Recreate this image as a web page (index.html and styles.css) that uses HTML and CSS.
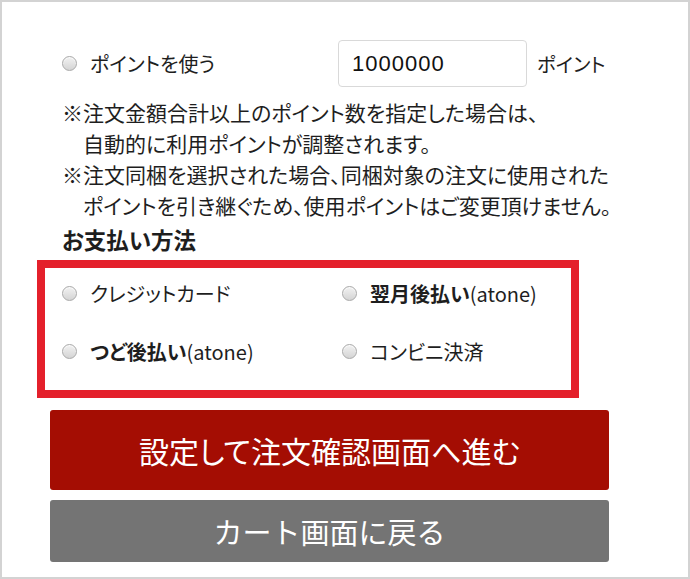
FILE: index.html
```html
<!DOCTYPE html>
<html lang="ja">
<head>
<meta charset="utf-8">
<title>お支払い方法</title>
<link rel="stylesheet" href="styles.css">
</head>
<body>
<div class="frame">
  <div class="intro">
    <div class="point-row">
      <label class="opt point-opt"><span class="radio"></span><span>ポイントを使う</span></label>
      <div class="point-input">1000000</div>
      <span class="unit">ポイント</span>
    </div>
    <div class="notes">
      <p class="note">※注文金額合計以上のポイント数を指定した場合は、<br>自動的に利用ポイントが調整されます。</p>
      <p class="note">※注文同梱を選択された場合、同梱対象の注文に使用された<br>ポイントを引き継ぐため、使用ポイントはご変更頂けません。</p>
    </div>
    <h2 class="heading">お支払い方法</h2>
  </div>
  <div class="pay-box">
    <label class="opt"><span class="radio"></span><span>クレジットカード</span></label>
    <label class="opt"><span class="radio"></span><span><b>翌月後払い</b>(atone)</span></label>
    <label class="opt"><span class="radio"></span><span><b>つど後払い</b>(atone)</span></label>
    <label class="opt"><span class="radio"></span><span>コンビニ決済</span></label>
  </div>
  <div class="buttons">
    <div class="btn btn-primary">設定して注文確認画面へ進む</div>
    <div class="btn btn-back">カート画面に戻る</div>
  </div>
</div>
</body>
</html>
```
FILE: styles.css
```css
* { box-sizing: border-box; }
html, body { margin: 0; padding: 0; background: #fff; }
body {
  font-family: "Noto Sans CJK JP", "Noto Sans", sans-serif;
  color: #1e1e1e;
  font-feature-settings: "palt";
}
.frame {
  width: 690px;
  height: 579px;
  border: 2px solid #d3d3d3;
  padding-left: 35px;
  overflow: hidden;
}
.intro { padding-left: 25px; }
.point-row {
  display: flex;
  align-items: center;
  margin-top: 38px;
  height: 47px;
}
.opt {
  display: flex;
  align-items: center;
  gap: 13px;
  font-size: 20px;
}
.point-opt { width: 276px; }
.radio {
  width: 15px;
  height: 15px;
  border-radius: 50%;
  border: 1px solid #a9a9a9;
  background: linear-gradient(#f2f2f2, #d4d4d4);
  box-shadow: inset 0 1px 1px rgba(255,255,255,0.8);
  flex: none;
}
.point-input {
  width: 189px;
  height: 47px;
  border: 1px solid #d9d9d9;
  border-radius: 4px;
  padding-left: 13px;
  display: flex;
  align-items: center;
  font-family: "Liberation Sans", Arial, sans-serif;
  font-size: 22px;
  letter-spacing: 1px;
  color: #111;
}
.unit { margin-left: 10px; font-size: 19.5px; }
.notes { margin-top: 10px; font-size: 21px; line-height: 31px; }
.note { margin: 0; padding-left: 1em; text-indent: -1em; }
.heading {
  margin: 3px 0 0;
  font-size: 22.5px;
  line-height: 30px;
  font-weight: bold;
}
.pay-box {
  margin-top: 6px;
  width: 542px;
  height: 138px;
  border: 8px solid #e4202b;
  display: grid;
  grid-template-columns: 280px 1fr;
  grid-template-rows: 50px 50px;
  row-gap: 8px;
  padding-left: 17px;
}
.pay-box b { font-weight: 600; }
.buttons {
  margin-top: 12px;
  margin-left: 13px;
  width: 559px;
  display: flex;
  flex-direction: column;
  gap: 10px;
}
.btn {
  display: flex;
  align-items: center;
  justify-content: center;
  color: #fff;
  border-radius: 3px;
}
.btn-primary {
  height: 80px;
  background: #a40d03;
  font-size: 30px;
}
.btn-back {
  height: 62px;
  background: #747474;
  font-size: 29px;
  font-feature-settings: normal;
}
```
